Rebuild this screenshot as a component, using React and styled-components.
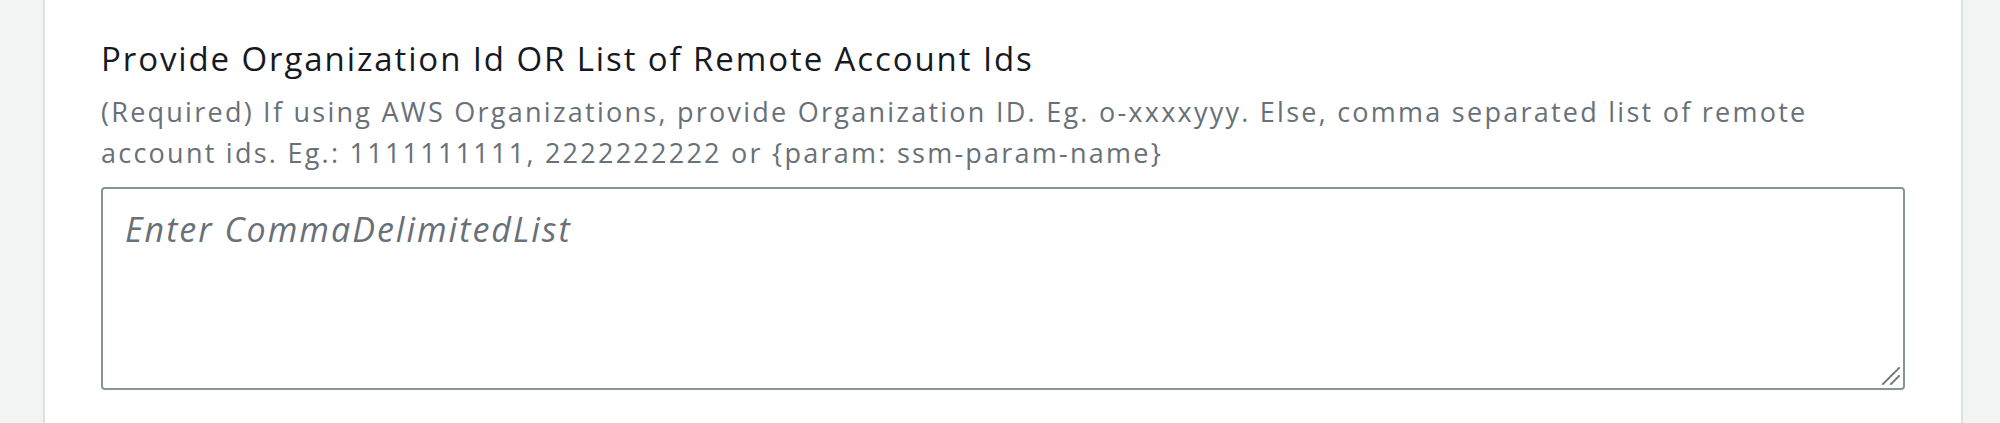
import React from 'react';
import styled, { createGlobalStyle } from 'styled-components';

const GlobalStyle = createGlobalStyle`
  html, body {
    margin: 0;
    background: #f2f3f3;
    font-family: 'Open Sans', 'Noto Sans', sans-serif;
  }
`;

const Page = styled.div`
  height: 423px;
  overflow: hidden;
  padding: 0 37px 0 43px;
`;

const Panel = styled.section`
  background: #ffffff;
  border-left: 2px solid #dde1e1;
  border-right: 2px solid #dde1e1;
  height: 100%;
  padding: 37px 56px 0;
`;

const Field = styled.div`
  display: flex;
  flex-direction: column;
`;

const Label = styled.label`
  color: #16191f;
  display: block;
  font-size: 33px;
  font-weight: 500;
  letter-spacing: 1.9px;
  line-height: 44px;
`;

const Description = styled.p`
  color: #687078;
  font-size: 27px;
  letter-spacing: 2.25px;
  line-height: 41px;
  margin: 10px 0 0;
  max-width: 1780px;
`;

const InputWrap = styled.div`
  margin-top: 14px;
  position: relative;
`;

const TextArea = styled.textarea`
  border: 2px solid #879596;
  border-radius: 4px;
  box-sizing: border-box;
  color: #16191f;
  display: block;
  font-family: inherit;
  font-size: 34px;
  height: 203px;
  letter-spacing: 2px;
  line-height: 46px;
  outline: none;
  padding: 17px 22px;
  resize: none;
  width: 100%;

  &::placeholder {
    color: #687078;
    font-style: italic;
    opacity: 1;
  }
`;

const Grip = styled.svg`
  bottom: 4px;
  pointer-events: none;
  position: absolute;
  right: 4px;
`;

const ResizeGrip = () => (
  <Grip width='20' height='20' viewBox='0 0 20 20'>
    <g stroke='#6b7475' strokeWidth='2' strokeDasharray='2 1.5' strokeLinecap='round'>
      <line x1='2' y1='18' x2='18' y2='2' />
      <line x1='10' y1='18' x2='18' y2='10' />
    </g>
  </Grip>
);

const App = () => (
  <>
    <GlobalStyle />
    <Page>
      <Panel>
        <Field>
          <Label htmlFor='orgIds'>Provide Organization Id OR List of Remote Account Ids</Label>
          <Description>
            (Required) If using AWS Organizations, provide Organization ID. Eg. o-xxxxyyy. Else,
            comma separated list of remote account ids. Eg.: 1111111111, 2222222222 or {'{param: ssm-param-name}'}
          </Description>
          <InputWrap>
            <TextArea id='orgIds' placeholder='Enter CommaDelimitedList' />
            <ResizeGrip />
          </InputWrap>
        </Field>
      </Panel>
    </Page>
  </>
);

export default App;
